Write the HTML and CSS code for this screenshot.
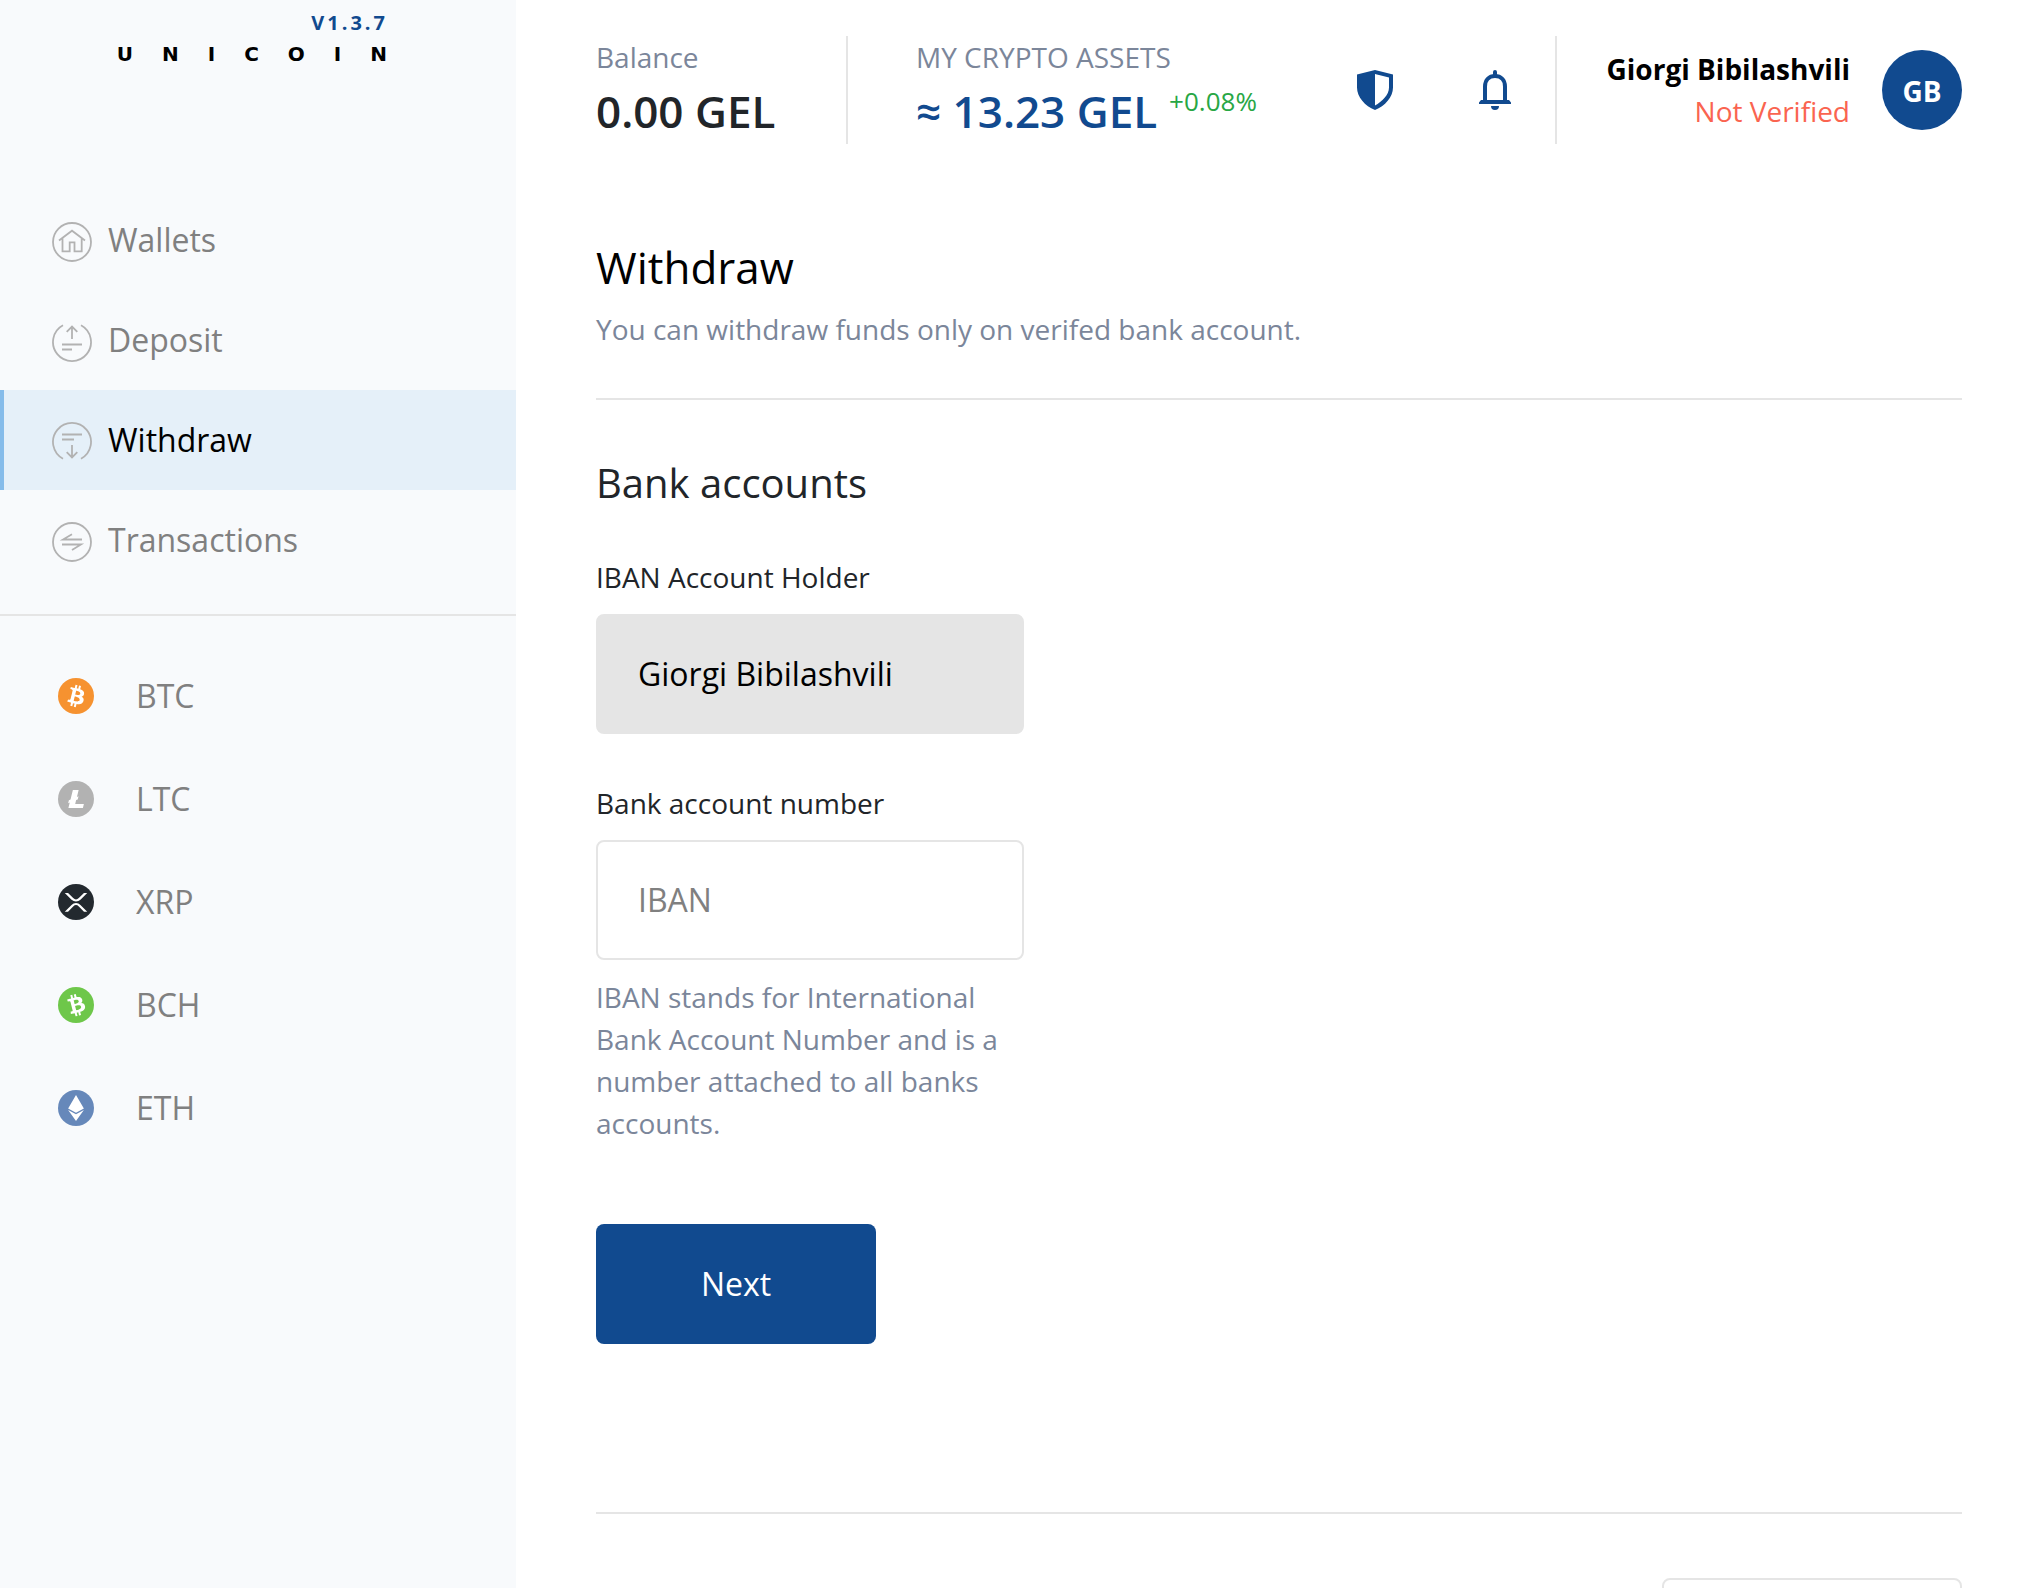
FILE: index.html
```html
<!DOCTYPE html>
<html lang="en">
<head>
<meta charset="utf-8">
<title>Unicoin – Withdraw</title>
<link rel="stylesheet" href="styles.css">
</head>
<body>
<div class="app">
  <aside class="sidebar">
    <a class="brand" href="#">
      <span class="version">V1.3.7</span>
      <span class="wordmark">UNICOIN</span>
    </a>
    <nav class="menu" aria-label="Main">
      <a class="menu-item" href="#">
        <svg class="menu-icon" viewBox="0 0 40 40"><circle cx="20" cy="20" r="19"/><path d="M7 18.500 20 8.700l13 9.800M10.500 16v13.300h7.200v-9h4.800v9h7.200V16"/></svg>
        <span>Wallets</span>
      </a>
      <a class="menu-item" href="#">
        <svg class="menu-icon" viewBox="0 0 40 40"><path d="M11 3.300A19 19 0 1 0 29 3.300M20 17V4.500M14.700 9.800 20 4.500l5.300 5.300M10 22.500h20M10 27.500h10"/></svg>
        <span>Deposit</span>
      </a>
      <a class="menu-item active" href="#" aria-current="page">
        <svg class="menu-icon" viewBox="0 0 40 40"><path d="M11 36.700A19 19 0 1 1 29 36.700M20 23v12.500M14.700 30.200 20 35.500l5.300-5.300M10 12.500h20M10 17.500h12"/></svg>
        <span>Withdraw</span>
      </a>
      <a class="menu-item" href="#">
        <svg class="menu-icon" viewBox="0 0 40 40"><circle cx="20" cy="20" r="19"/><path d="M20 12.300 11 17.500h19M10 22.500h19L20 28"/></svg>
        <span>Transactions</span>
      </a>
    </nav>
    <nav class="coins" aria-label="Coins">
      <a class="coin" href="#">
        <svg class="coin-icon" viewBox="0 0 32 32"><circle cx="16" cy="16" r="16" fill="#f69230"/><path fill="#fff" d="M23.189 14.020c.314-2.096-1.283-3.223-3.465-3.975l.708-2.840-1.728-.43-.69 2.765c-.454-.114-.92-.22-1.385-.326l.695-2.783L15.596 6l-.708 2.839c-.376-.086-.746-.17-1.104-.26l.002-.009-2.384-.595-.46 1.846s1.283.294 1.256.312c.7.175.826.638.805 1.006l-.806 3.235c.048.012.11.030.18.057l-.183-.045-1.130 4.532c-.086.212-.303.531-.793.410.018.025-1.256-.313-1.256-.313l-.858 1.978 2.250.561c.418.105.828.215 1.231.318l-.715 2.872 1.727.43.708-2.840c.472.127.930.245 1.378.357l-.706 2.828 1.728.43.715-2.866c2.948.558 5.164.333 6.097-2.333.752-2.146-.037-3.385-1.588-4.192 1.130-.26 1.980-1.003 2.207-2.538zm-3.950 5.538c-.533 2.147-4.148.986-5.320.695l.950-3.805c1.172.293 4.929.872 4.370 3.110zm.535-5.569c-.487 1.953-3.495.960-4.470.717l.860-3.450c.975.243 4.118.696 3.610 2.733z"/></svg>
        <span>BTC</span>
      </a>
      <a class="coin" href="#">
        <svg class="coin-icon" viewBox="0 0 32 32"><circle cx="16" cy="16" r="16" fill="#b2b2b2"/><path fill="#fff" d="M10.427 19.214 9 19.768l.688-2.759 1.444-.580L13.213 8h5.129l-1.519 6.196 1.410-.571-.680 2.750-1.427.571-.848 3.483H23L22.127 24H9.252z"/></svg>
        <span>LTC</span>
      </a>
      <a class="coin" href="#">
        <svg class="coin-icon" viewBox="0 0 32 32"><circle cx="16" cy="16" r="16" fill="#23292f"/><path fill="#fff" d="M23.070 8h2.890l-6.015 5.957a5.621 5.621 0 0 1-7.890 0L6.035 8H8.930l4.570 4.523a3.556 3.556 0 0 0 4.996 0L23.070 8zM8.895 24.563H6l6.055-5.993a5.621 5.621 0 0 1 7.890 0L26 24.562h-2.895L18.500 20a3.556 3.556 0 0 0-4.996 0l-4.610 4.563z"/></svg>
        <span>XRP</span>
      </a>
      <a class="coin" href="#">
        <svg class="coin-icon" viewBox="0 0 32 32"><circle cx="16" cy="16" r="16" fill="#6ec74a"/><path fill="#fff" transform="rotate(-28 16 16)" d="M23.189 14.020c.314-2.096-1.283-3.223-3.465-3.975l.708-2.840-1.728-.43-.69 2.765c-.454-.114-.92-.22-1.385-.326l.695-2.783L15.596 6l-.708 2.839c-.376-.086-.746-.17-1.104-.26l.002-.009-2.384-.595-.46 1.846s1.283.294 1.256.312c.7.175.826.638.805 1.006l-.806 3.235c.048.012.11.030.18.057l-.183-.045-1.130 4.532c-.086.212-.303.531-.793.410.018.025-1.256-.313-1.256-.313l-.858 1.978 2.250.561c.418.105.828.215 1.231.318l-.715 2.872 1.727.43.708-2.840c.472.127.930.245 1.378.357l-.706 2.828 1.728.43.715-2.866c2.948.558 5.164.333 6.097-2.333.752-2.146-.037-3.385-1.588-4.192 1.130-.26 1.980-1.003 2.207-2.538zm-3.950 5.538c-.533 2.147-4.148.986-5.320.695l.950-3.805c1.172.293 4.929.872 4.370 3.110zm.535-5.569c-.487 1.953-3.495.960-4.470.717l.860-3.450c.975.243 4.118.696 3.610 2.733z"/></svg>
        <span>BCH</span>
      </a>
      <a class="coin" href="#">
        <svg class="coin-icon" viewBox="0 0 32 32"><circle cx="16" cy="16" r="16" fill="#6688ba"/><path fill="#fff" d="m16 4.500 7 12-7 3.800-7-3.800zM9 17.800l7 3.800 7-3.800-7 9.700z"/></svg>
        <span>ETH</span>
      </a>
    </nav>
  </aside>

  <div class="page">
    <header class="topbar">
      <div class="stat balance">
        <span class="stat-label">Balance</span>
        <strong class="stat-value">0.00 GEL</strong>
      </div>
      <div class="stat assets">
        <span class="stat-label">MY CRYPTO ASSETS</span>
        <div class="stat-row">
          <strong class="stat-value">≈ 13.23 GEL</strong>
          <span class="change">+0.08%</span>
        </div>
      </div>
      <div class="actions">
        <button class="icon-button" type="button" aria-label="Security">
          <svg viewBox="0 0 40 40"><path fill="#114a8f" fill-rule="evenodd" d="M20 0 38 4.500v13C38 27 30 36 20 40 10 36 2 27 2 17.500v-13zM20 4v31.500c7-4 14-10.500 14-18V7.500z"/></svg>
        </button>
        <button class="icon-button" type="button" aria-label="Notifications">
          <svg viewBox="0 0 40 40"><path fill="none" stroke="#114a8f" stroke-width="4" d="M10 32V16.500C10 10 14 6 20 6s10 4 10 10.500V32"/><path fill="#114a8f" d="M18 6V2a2 2 0 0 1 4 0v4zM6 30h28l2 2.500V34H4v-1.500zM16 36h8a4 4 0 0 1-8 0z"/></svg>
        </button>
      </div>
      <div class="user">
        <div class="user-text">
          <strong class="user-name">Giorgi Bibilashvili</strong>
          <span class="user-status">Not Verified</span>
        </div>
        <span class="avatar">GB</span>
      </div>
    </header>

    <main class="content">
      <div class="intro">
        <h1>Withdraw</h1>
        <p>You can withdraw funds only on verifed bank account.</p>
      </div>
      <form class="bank-form">
        <h2>Bank accounts</h2>
        <div class="field">
          <label for="holder">IBAN Account Holder</label>
          <input id="holder" type="text" value="Giorgi Bibilashvili" disabled>
        </div>
        <div class="field">
          <label for="iban">Bank account number</label>
          <input id="iban" type="text" placeholder="IBAN">
          <p class="hint">IBAN stands for International Bank Account Number and is a number attached to all banks accounts.</p>
        </div>
        <button class="next" type="submit">Next</button>
      </form>
      <div class="footer">
        <button class="footer-box" type="button" aria-label="Language"></button>
      </div>
    </main>
  </div>
</div>
</body>
</html>
```

FILE: styles.css
```css
* { box-sizing: border-box; }

body {
  margin: 0;
  background: #fff;
  color: #212529;
  font-family: "Open Sans", sans-serif;
  font-size: 28px;
  line-height: 42px;
}

h1, h2, p { margin: 0; font-weight: 400; }
a { color: inherit; text-decoration: none; }
button, input { font: inherit; }
svg { display: block; flex: none; }

.app {
  display: flex;
  height: 100vh;
  overflow: hidden;
}

/* Sidebar */
.sidebar {
  flex: none;
  width: 516px;
  background: #f8fafc;
}

.brand {
  display: flex;
  flex-direction: column;
  align-items: flex-end;
  height: 190px;
  padding: 8px 130px 0 0;
}

.version {
  color: #114a8f;
  font-size: 20px;
  font-weight: 700;
  line-height: 30px;
  letter-spacing: 3px;
  margin-right: -2px;
}

.wordmark {
  color: #000;
  font-family: "DejaVu Sans", sans-serif;
  font-size: 20px;
  font-weight: 700;
  line-height: 32px;
  letter-spacing: 29px;
  margin-right: -30px;
}

.menu {
  padding-bottom: 24px;
  border-bottom: 2px solid #e5e5e5;
  color: #808080;
  font-size: 32px;
}

.menu-item {
  display: flex;
  align-items: center;
  gap: 16px;
  height: 100px;
  padding-left: 48px;
  border-left: 4px solid transparent;
}

.menu-item.active {
  background: #e5f0f9;
  border-left-color: #85bcea;
  color: #000;
}

.menu-icon {
  width: 40px;
  height: 40px;
  margin-top: 4px;
  fill: none;
  stroke: #b2b2b2;
  stroke-width: 1.800;
}

.coins {
  display: flex;
  flex-direction: column;
  gap: 55px;
  padding: 56px 58px;
  color: #808080;
  font-size: 32px;
  line-height: 48px;
}

.coin {
  display: flex;
  align-items: center;
  gap: 42px;
}

.coin-icon { width: 36px; height: 36px; }

/* Top bar */
.page {
  flex: 1;
  min-width: 0;
  padding: 36px 76px 0 80px;
}

.topbar {
  display: flex;
  height: 108px;
}

.stat { display: flex; flex-direction: column; }

.stat-label {
  color: #7b869a;
  line-height: 42px;
}

.stat-value {
  font-size: 44px;
  font-weight: 600;
  line-height: 66px;
}

.balance {
  width: 252px;
  border-right: 2px solid #e5e5e5;
}

.assets { margin-left: 68px; }
.assets .stat-value { color: #114a8f; }
.stat-row { display: flex; gap: 12px; }

.change {
  color: #28a745;
  font-size: 26px;
  line-height: 46px;
}

.actions {
  display: flex;
  flex: 1;
  align-items: center;
  justify-content: flex-end;
  gap: 80px;
  padding-right: 40px;
}

.icon-button {
  width: 40px;
  height: 40px;
  padding: 0;
  border: 0;
  background: none;
}

.user {
  display: flex;
  align-items: center;
  gap: 32px;
  padding-left: 50px;
  border-left: 2px solid #e5e5e5;
}

.user-text {
  display: flex;
  flex-direction: column;
  align-items: flex-end;
}

.user-name { color: #000; font-weight: 700; }
.user-status { color: #fa6450; }

.avatar {
  width: 80px;
  height: 80px;
  border-radius: 50%;
  background: #114a8f;
  color: #fff;
  font-weight: 700;
  line-height: 82px;
  text-align: center;
}

/* Content */
.intro {
  padding: 88px 0 42px;
  border-bottom: 2px solid #e5e5e5;
}

h1 { color: #000; font-size: 44px; line-height: 70px; }
.intro p { color: #7b869a; line-height: 54px; }

.bank-form {
  padding: 52px 0 168px;
  border-bottom: 2px solid #e5e5e5;
}

h2 { font-size: 40px; line-height: 62px; }

.field { width: 428px; margin-top: 48px; }
.field label { display: block; margin-bottom: 16px; }

h2 + .field { margin-top: 42px; }

.field input {
  display: block;
  width: 100%;
  height: 120px;
  padding: 0 40px 2px;
  border: 2px solid #e5e5e5;
  border-radius: 8px;
  background: #fff;
  color: #000;
  font-size: 32px;
}

.field input:disabled { background: #e5e5e5; }
.field input::placeholder { color: #808080; }

.hint { margin-top: 16px; color: #7b869a; }

.next {
  display: block;
  width: 280px;
  height: 120px;
  margin-top: 80px;
  border: 0;
  border-radius: 8px;
  background: #114a8f;
  color: #fff;
  font-size: 32px;
}

.footer {
  display: flex;
  justify-content: flex-end;
  padding-top: 64px;
}

.footer-box {
  width: 300px;
  height: 120px;
  border: 2px solid #e5e5e5;
  border-radius: 8px;
  background: #fff;
}
```
